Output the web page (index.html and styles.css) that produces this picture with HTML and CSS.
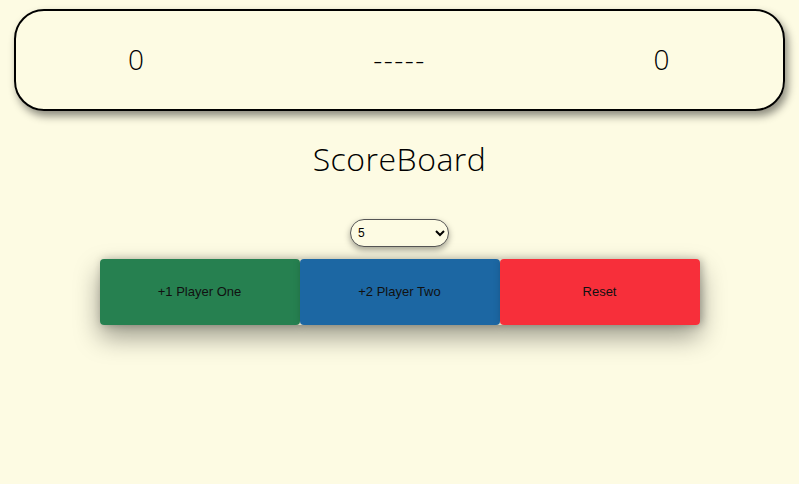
FILE: index.html
```html
<!DOCTYPE html>
<html>
<head>
<meta charset="utf-8">
<link rel="stylesheet" href="styles.css">
</head>
<body>
<div class="board">
  <span class="score">0</span>
  <span class="score">-----</span>
  <span class="score">0</span>
</div>
<h1 class="title">ScoreBoard</h1>
<div class="controls">
  <select class="limit">
    <option>5</option>
    <option>7</option>
    <option>10</option>
  </select>
  <div class="buttons">
    <button class="btn btn-one">+1 Player One</button>
    <button class="btn btn-two">+2 Player Two</button>
    <button class="btn btn-reset">Reset</button>
  </div>
</div>
</body>
</html>
```
FILE: styles.css
```css
html {
  margin: 0;
  padding: 0;
  min-height: 100%;
  background: #fdfbe3;
}
body {
  margin: 0;
  padding: 9px 14px 80px 14px;
  font-family: "Open Sans", "DejaVu Sans", sans-serif;
  color: #111;
}
.board {
  height: 98px;
  border: 2px solid #000;
  border-radius: 30px;
  box-shadow: 3px 5px 8px rgba(0,0,0,0.45);
  display: flex;
  justify-content: space-between;
  align-items: center;
  padding: 0 112px 0 112px;
}
.score {
  font-size: 28px;
  font-weight: 300;
  letter-spacing: 1.5px;
  margin-top: -2px;
  color: #000;
}
.title {
  margin: 26px 0 0 0;
  text-align: center;
  font-size: 32px;
  font-weight: 300;
  line-height: 44px;
  letter-spacing: 0.5px;
  color: #000;
}
.controls {
  display: flex;
  flex-direction: column;
  align-items: center;
  margin-top: 38px;
}
.limit {
  width: 99px;
  height: 28px;
  border-radius: 14px;
  border: 1px solid #555;
  background: #fdfbe3;
  box-shadow: 0 3px 6px rgba(0,0,0,0.35);
  font-family: "Liberation Sans", Arial, sans-serif;
  font-size: 12px;
  padding: 0 3px;
  color: #000;
}
.buttons {
  display: flex;
  margin-top: 12px;
  box-shadow: 0 12px 26px rgba(0,0,0,0.38);
  border-radius: 4px;
}
.btn {
  width: 200px;
  height: 66px;
  border: none;
  border-radius: 4px;
  font-family: "Liberation Sans", Arial, sans-serif;
  font-size: 13px;
  color: #111;
  padding: 0 0 2px 0;
  box-shadow: 2px 0 8px rgba(0,0,0,0.25);
}
.btn-one { background: #268050; }
.btn-two { background: #1c67a3; }
.btn-reset { background: #f72f3a; }
```
